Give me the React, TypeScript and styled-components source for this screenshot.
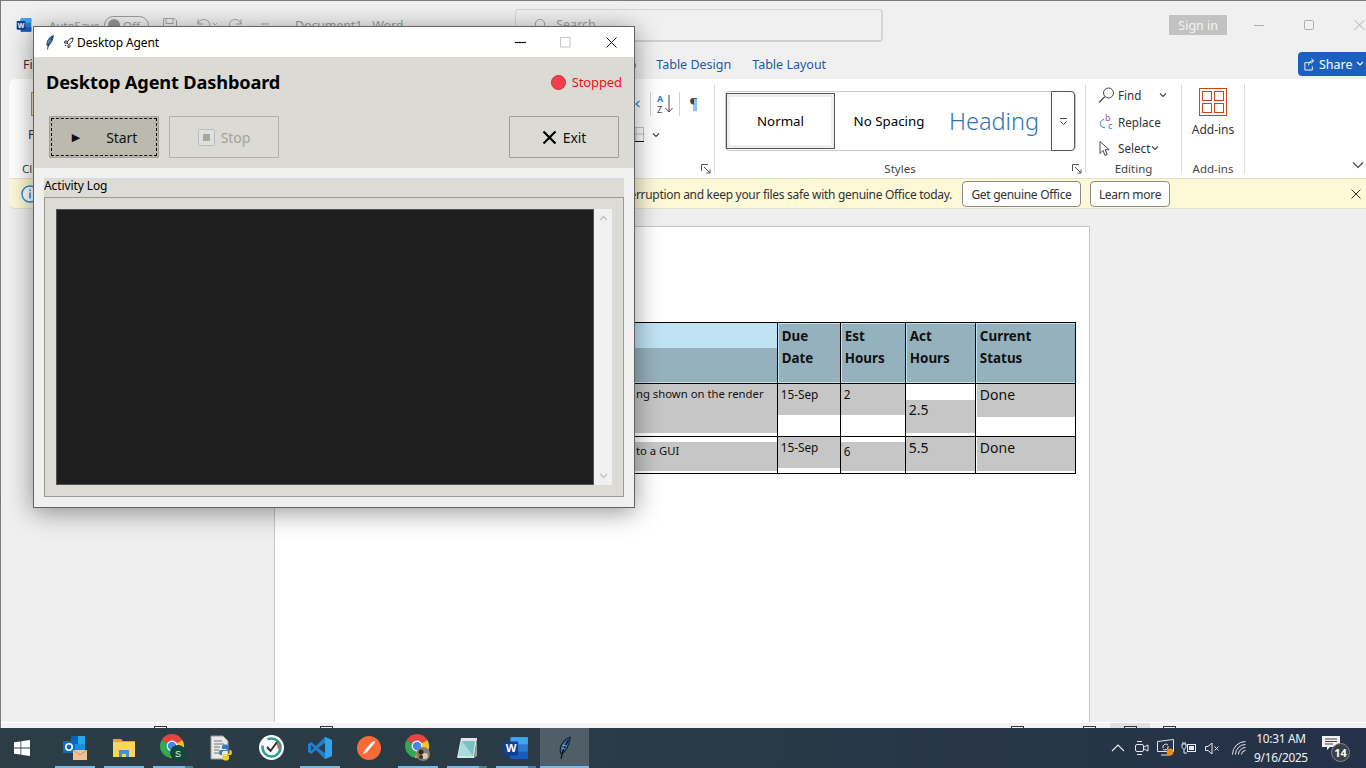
import React from "react";
import styled, { createGlobalStyle } from "styled-components";

const FONT = `"Noto Sans", "Open Sans", "Liberation Sans", sans-serif`;

const Global = createGlobalStyle`
  html, body { margin: 0; padding: 0; background: #f0f0f0; }
  * { box-sizing: border-box; }
  body { font-family: ${FONT}; }
`;

const Screen = styled.div`
  width: 1366px; height: 768px; position: relative; overflow: hidden;
  display: flex; flex-direction: column; font-family: ${FONT};
`;

/* ---------- Word window ---------- */
const WordWindow = styled.div`
  flex: 1; min-height: 0; display: flex; flex-direction: column;
  border-top: 1px solid #7a7a7a; border-left: 1px solid #7a7a7a; background: #f0f0f0;
`;
const WordTitle = styled.div`
  height: 48px; display: flex; align-items: center; padding-left: 15px; position: relative; color: #9a9a9a;
  font-size: 12.5px; flex: none;
`;
const AutoLabel = styled.span`margin-left: 17px; width: 55px; flex: none; font-size: 11.6px; white-space: nowrap; letter-spacing: -0.1px;`;
const DocName = styled.span`margin-left: 4px; white-space: nowrap; letter-spacing: -0.15px;`;
const AutoToggle = styled.div`
  width: 45px; height: 19px; border: 1px solid #9c9c9c; border-radius: 10px; flex: none;
  display: flex; align-items: center; padding-left: 3px; gap: 3px; font-size: 11.5px; color: #a0a0a0;
`;
const Knob = styled.span`width: 12px; height: 12px; border-radius: 50%; background: #9a9a9a;`;
const QuickIcons = styled.svg`margin-left: 12px; flex: none;`;
const SearchBox = styled.div`
  margin-left: 112px; width: 368px; height: 33px; background: #f0f0f0; border: 1px solid #d6d6d6;
  border-bottom: 2px solid #cfcfcf; border-right: 2px solid #d6d6d6; border-radius: 4px;
  display: flex; align-items: center; padding-left: 16px; gap: 10px; color: #a0a0a0; font-size: 12.5px;
`;
const SignIn = styled.div`
  margin-left: 286px; width: 58px; height: 20px; background: #c2c2c2; color: #f4f4f4; border-radius: 1px;
  font-size: 12.5px; display: flex; align-items: center; justify-content: center;
`;
const Caption = styled.div`
  margin-left: 27px; display: flex; align-items: center; gap: 40px;
`;
const TabRow = styled.div`
  height: 30px; display: flex; align-items: center; font-size: 12.5px; flex: none; position: relative; padding-left: 22px;
`;
const Tab = styled.span<{ $blue?: boolean; $ml?: number }>`
  color: ${p => (p.$blue ? "#1c58ad" : "#333")}; margin-left: ${p => p.$ml ?? 0}px; white-space: nowrap; padding-top: 1px;
`;
const ShareBtn = styled.div`
  margin-left: auto; width: 68px; height: 24px; background: #1b5fc1; color: #fff; border-radius: 4px 0 0 4px;
  display: flex; align-items: center; padding-left: 5px; gap: 3px; font-size: 12.5px;
`;
const Ribbon = styled.div`
  margin-left: 8px; height: 99px; flex: none; background: #fff; border-radius: 7px 0 0 0;
  display: flex; position: relative; color: #333;
`;
const RibbonGroup = styled.div<{ $w: number; $sep?: boolean }>`
  width: ${p => p.$w}px; flex-shrink: 0;
  position: relative; display: flex; flex-direction: column; margin: 5px 0;
  ${p => (p.$sep ? "border-right: 1px solid #dcdcdc;" : "")}
`;
const GroupBody = styled.div`flex: 1; min-height: 0; display: flex; position: relative;`;
const GroupLabel = styled.div<{ $left?: boolean; $pl?: number }>`
  height: 11px; font-size: 11.5px; line-height: 14px; color: #444; text-align: ${p => (p.$left ? "left" : "center")};
  padding-left: ${p => p.$pl ?? 0}px; white-space: nowrap; flex: none;
`;
const Launcher = styled.svg`position: absolute; right: 3px; bottom: -1px;`;
const ClipIcon = styled.div`
  margin: 8px 0 0 22px; width: 30px; height: 24px; border: 1px solid #d08a2a; background: #f6e7c9; flex: none;
`;
const ClipColumn = styled.div`display: flex; flex-direction: column; font-size: 12.5px; color: #333;`;
const ClipText = styled.div`margin: 10px 0 0 19px; line-height: 18px;`;
const ParaBody = styled.div`
  flex: 1; min-height: 0; display: flex; flex-direction: column; align-items: flex-end; padding: 7px 15px 0 0;
`;
const ParaRow = styled.div`display: flex; align-items: center; height: 25px;`;
const ParaRowTwo = styled.div`display: flex; align-items: center; height: 25px; margin: 6px 39px 0 0; gap: 8px;`;
const ParaSep = styled.div<{ $l: number; $r: number }>`width: 1px; height: 24px; background: #cfcfcf; margin: 0 ${p => p.$r}px 0 ${p => p.$l}px;`;
const Pilcrow = styled.span`font-size: 16px; color: #444; font-family: "Liberation Serif", serif; line-height: 1; width: 11px; text-align: center;`;
const OpenSvg = styled.svg`overflow: visible; flex: none;`;
const Gallery = styled.div`
  margin: 7px 0 0 10px; width: 351px; height: 60px; border: 1px solid #c9c9c9; border-radius: 4px;
  display: flex; align-items: stretch; color: #000;
`;
const StyleSelected = styled.div`
  width: 109px; margin: 1px 0 1px 0; border: 1px solid #555; outline: 3px solid #eee; outline-offset: -4px; background: #fff;
  display: flex; align-items: center; justify-content: center; font-size: 13.3px;
`;
const StyleItem = styled.div<{ $w: number; $heading?: boolean }>`
  width: ${p => p.$w}px; display: flex; align-items: center; justify-content: center; white-space: nowrap;
  font-size: ${p => (p.$heading ? 23.5 : 13.3)}px; color: ${p => (p.$heading ? "#2e74b5" : "#000")};
  font-weight: ${p => (p.$heading ? 300 : 400)};
`;
const GalleryMore = styled.div`
  margin-left: auto; width: 24px; margin-top: -1px; margin-bottom: -1px; border: 1px solid #555; border-radius: 0 4px 4px 0; background: #fff;
  display: flex; align-items: center; justify-content: center;
`;
const EditCol = styled.div`flex: 1; min-height: 0; display: flex; flex-direction: column; margin-top: -2px; padding: 0 0 0 12px; font-size: 11.7px; color: #333;`;
const EditRow = styled.div`height: 26.5px; flex: none; display: flex; align-items: center; white-space: nowrap;`;
const EditIcon = styled.span`width: 20px; display: inline-flex; flex: none;`;
const EditChevron = styled.svg<{ $ml: number }>`margin-left: ${p => p.$ml}px;`;
const AddinsCol = styled.div`flex: 1; min-height: 0; display: flex; flex-direction: column; align-items: center; font-size: 12px; color: #333; padding-top: 4px;`;
const AddinsText = styled.div`margin-top: 5px;`;
const Collapse = styled.svg`position: absolute; right: 2px; bottom: 9px;`;

const MessageBar = styled.div`
  margin-left: 8px; height: 31px; flex: none; background: #fdf8d6; border-top: 1px solid #e6e2c6; border-bottom: 1px solid #e6e2c6;
  display: flex; align-items: center; font-size: 12px; color: #333; position: relative; border-radius: 0 0 0 6px;
`;
const InfoBadge = styled.svg`margin-left: 12px; flex: none;`;
const MessageText = styled.div`flex: 1; text-align: right; white-space: nowrap; overflow: hidden; letter-spacing: -0.3px; padding-top: 1px;`;
const MsgButton = styled.button<{ $w: number; $ml: number }>`
  width: ${p => p.$w}px; margin-left: ${p => p.$ml}px; height: 26px; background: #fff; border: 1px solid #8a8a8a; border-radius: 4px;
  font: 12px ${FONT}; color: #333; padding: 1px 0 0; flex: none; letter-spacing: -0.3px;
`;
const MsgClose = styled.svg`margin: 0 5px 0 181px; flex: none;`;

const DocArea = styled.div`flex: 1; min-height: 0; padding: 17px 0 0 273px; background: #efefef;`;
const Page = styled.div`
  width: 816px; height: 100%; background: #fff; border: 1px solid #c6c6c6; border-bottom: none;
  padding: 95px 0 0 358px;
`;
const DocTable = styled.table`
  border-collapse: collapse; table-layout: fixed; width: 443px; font-family: ${FONT}; color: #111;
  th, td { border: 1px solid #000; padding: 0; vertical-align: top; overflow: hidden; }
  th:first-child, td:first-child { border-left: none; }
`;
const HeadCell = styled.th<{ $w: number }>`
  width: ${p => p.$w}px; height: 61px; background: #bfe3f3; font-weight: 700; font-size: 13.4px; text-align: left;
`;
const HeadFill = styled.div<{ $top?: number }>`
  background: #96b1be; margin: ${p => p.$top ?? 1}px 0 1px 1px; height: ${p => 58 - (p.$top ?? 1) + 1}px; padding: 1px 0 0 3px; line-height: 22px;
`;
const Shade = styled.div<{ $top?: number; $h: number; $size?: number; $pad?: number; $inset?: boolean }>`
  margin-top: ${p => p.$top ?? 0}px; height: ${p => p.$h}px; background: #c6c6c6;
  ${p => (p.$inset ? "margin-left: 1px;" : "")}
  font-size: ${p => p.$size ?? 11.8}px; padding: ${p => p.$pad ?? 2}px 0 0 3px; line-height: 16px; white-space: nowrap;
`;
const BodyRow = styled.tr<{ $h: number }>`height: ${p => p.$h}px;`;

const StatusBar = styled.div`
  height: 6px; flex: none; background: #f3f3f3; display: flex; overflow: hidden; position: relative; border-top: 1px solid #fff;
`;
const StatusGlyph = styled.div<{ $ml: number }>`
  margin: 3px 0 0 ${p => p.$ml}px; width: 13px; height: 10px; border: 1px solid #333; flex: none;
`;
const StatusActive = styled.div<{ $ml: number }>`
  margin-left: ${p => p.$ml}px; width: 40px; background: #e0e0e0; flex: none; padding: 3px 0 0 14px; position: relative;
`;
const StatusGlyphInner = styled.div`width: 13px; height: 10px; border: 1px solid #333;`;

/* ---------- Taskbar ---------- */
const Taskbar = styled.div`
  height: 40px; flex: none; display: flex; align-items: stretch;
  background: linear-gradient(90deg, #2c3d45 0%, #2a3a47 50%, #243149 100%); color: #fff; position: relative;
`;
const StartBtn = styled.div`width: 50px; display: flex; align-items: center; justify-content: center; padding-right: 6px; flex: none;`;
const TaskItem = styled.div<{ $open?: boolean; $multi?: boolean; $active?: boolean }>`
  width: 49px; flex: none; display: flex; align-items: center; justify-content: center; position: relative; padding: 0 0 1px 1px;
  ${p => (p.$active ? "background: #505f67;" : "")}
  ${p => p.$open ? `&::after { content: ""; position: absolute; left: ${p.$active ? 0 : 5}px; right: ${p.$active ? 0 : p.$multi ? 12 : 4}px; bottom: 0; height: 2px; background: #76b9ed; }` : ""}
  ${p => p.$multi ? `&::before { content: ""; position: absolute; left: 37px; right: 4px; bottom: 0; height: 2px; background: #4f7f9f; }` : ""}
`;
const Tray = styled.div`margin-left: auto; display: flex; align-items: center; padding-right: 14px;`;
const TrayIcon = styled.span<{ $w: number }>`width: ${p => p.$w}px; display: flex; justify-content: center; align-items: center; flex: none;`;
const Clock = styled.div`
  width: 54px; margin: 0 14px 0 0; text-align: center; font-size: 11.8px; line-height: 19px; color: #f2f2f2; white-space: nowrap;
  display: flex; flex-direction: column; align-items: center; letter-spacing: -0.25px;
`;
const Notif = styled.div`width: 30px; height: 30px; position: relative; flex: none; margin-top: 2px;`;
const NotifBadge = styled.div`
  position: absolute; left: 9px; top: 9px; width: 19px; height: 19px; border-radius: 50%; background: #3a4048; border: 1px solid #888;
  font-size: 11px; font-weight: 700; display: flex; align-items: center; justify-content: center; color: #fff;
`;

/* ---------- Agent window ---------- */
const AgentWindow = styled.div`
  position: absolute; left: 33px; top: 26px; width: 602px; height: 482px; background: #f0f0f0; border: 1px solid #646464;
  box-shadow: 0 4px 24px rgba(0,0,0,.42); display: flex; flex-direction: column; color: #000;
`;
const AgentTitle = styled.div`
  height: 30px; flex: none; background: #fff; display: flex; align-items: center; padding-left: 11px; font-size: 12px;
`;
const TitleText = styled.span`margin-left: 3px; white-space: nowrap; letter-spacing: -0.1px;`;
const TitleEmoji = styled.svg`margin-left: 9px;`;
const AgentCaption = styled.div`margin-left: auto; display: flex; align-items: center;`;
const CapBtn = styled.span<{ $w: number }>`width: ${p => p.$w}px; display: flex; justify-content: center;`;
const AgentHeader = styled.div`background: #dbdad5; flex: none; height: 111px; display: flex; flex-direction: column;`;
const HeaderTop = styled.div`height: 50px; flex: none; display: flex; align-items: center; padding: 0 12px 0 12px;`;
const Heading = styled.h1`margin: 0; font-size: 18.2px; font-weight: 700; white-space: nowrap; letter-spacing: -0.15px;`;
const StatusWrap = styled.div`margin-left: auto; display: flex; align-items: center; gap: 6px; color: #fa0a14; font-size: 13px; letter-spacing: -0.1px;`;
const StatusDot = styled.span`
  width: 15px; height: 15px; border-radius: 50%; background: #f2404a; border: 1px solid #c9313a;
  background-image: radial-gradient(#d8303a 30%, transparent 32%); background-size: 2px 2px;
`;
const Toolbar = styled.div`margin-top: 9px; padding: 0 15px; display: flex; gap: 10px;`;
const ActionBtn = styled.button<{ $variant?: "pressed" | "disabled" }>`
  width: 110px; height: 42px; border: 1px solid ${p => (p.$variant === "disabled" ? "#b1afa7" : "#a09e95")}; border-radius: 1px; padding: 0;
  background: ${p => (p.$variant === "pressed" ? "#bcb9ae" : "#dbdad5")};
  color: ${p => (p.$variant === "disabled" ? "#a3a29d" : "#111")};
  font: 14px ${FONT}; display: flex; align-items: center; justify-content: center; letter-spacing: -0.1px;
  ${p => (p.$variant === "pressed" ? "outline: 1px dashed #000; outline-offset: -3px; gap: 26px; padding-left: 1px;" : "gap: 6px;")}
`;
const PushRight = styled.div`margin-left: auto;`;
const PlayGlyph = styled.span`font: 11px "DejaVu Sans", sans-serif;`;
const LogSection = styled.section`flex: 1; padding: 10px; display: flex; flex-direction: column; min-height: 0;`;
const LogLabel = styled.div`height: 19px; background: #dcdbd6; font-size: 12px; line-height: 16px; letter-spacing: -0.1px; flex: none;`;
const LogFrame = styled.div`
  flex: 1; background: #dcdbd6; border: 1px solid #9c998f; padding: 11px; display: flex; min-height: 0;
`;
const LogText = styled.div`flex: 1; background: #1e1e1e; border: 1px solid #55544f;`;
const Scroll = styled.div`
  width: 18px; background: #f0f0f0; display: flex; flex-direction: column; justify-content: space-between; align-items: center; padding: 6px 0;
`;

/* ---------- Icons ---------- */
const WordLogo = ({ s = 16 }: { s?: number }) => (
  <svg width={s} height={s} viewBox="0 0 24 24">
    <rect x="7" y="2" width="16" height="20" rx="1.5" fill="#2b7cd3" />
    <rect x="7" y="2" width="16" height="6.6" fill="#41a5ee" />
    <rect x="7" y="15.3" width="16" height="6.7" fill="#185abd" />
    <rect x="1" y="6" width="13" height="13" rx="1.2" fill="#103f91" />
    <text x="7.5" y="16" fontSize="10.5" fontWeight="700" fill="#fff" textAnchor="middle" fontFamily="Liberation Sans">W</text>
  </svg>
);
const Feather = ({ w = 12, h = 18, dark = false }: { w?: number; h?: number; dark?: boolean }) => (
  <svg width={w} height={h} viewBox="0 0 12 20">
    <path d="M10.6 .8C6 2 2.2 6.4 1.8 12c-.1 1.6.4 2.6 1.2 3 3.6-1.8 6.4-7 7.6-14.2z" fill={dark ? "#2f6aa0" : "#3d86c6"} stroke="#0d1a2a" strokeWidth=".9" />
    <path d="M9 3 4.2 12.6 2.6 19.4" fill="none" stroke="#05090f" strokeWidth="1" />
    <path d="M3 10l3 1M4 7.5l3.5 .8" stroke="#bcd8ef" strokeWidth=".6" />
  </svg>
);
const Chrome = ({ extra }: { extra?: React.ReactNode }) => (
  <svg width="28" height="28" viewBox="0 0 28 28" style={{ overflow: "visible" }}>
    <g transform="translate(1 0)">
      <path d="M12 12 1.6 6A12 12 0 0 1 22.4 6z" fill="#e8453c" />
      <path d="M12 12 1.6 6A12 12 0 0 0 10 23.8z" fill="#34a853" />
      <path d="M12 12 22.4 6A12 12 0 0 1 10 23.8z" fill="#fbc02d" />
      <circle cx="12" cy="12" r="5.4" fill="#fff" />
      <circle cx="12" cy="12" r="4.2" fill="#4285f4" />
    </g>
    {extra}
  </svg>
);
const LauncherSvg = () => (
  <Launcher width="10" height="10" viewBox="0 0 10 10"><path d="M.5 7V.5H7M3 3l6 6M9 5.5V9H5.5" fill="none" stroke="#555" strokeWidth="1" /></Launcher>
);
const Chevron = ({ ml = 0 }: { ml?: number }) => (
  <EditChevron $ml={ml} width="8" height="6" viewBox="0 0 8 6"><path d="M1 1.5l3 3 3-3" fill="none" stroke="#444" strokeWidth="1.1" /></EditChevron>
);

export default function App() {
  return (
    <Screen>
      <Global />
      <WordWindow>
        <WordTitle>
          <WordLogo />
          <AutoLabel>AutoSave</AutoLabel>
          <AutoToggle><Knob />Off</AutoToggle>
          <QuickIcons width="130" height="18" viewBox="0 0 130 18" fill="none" stroke="#a4a4a4" strokeWidth="1">
            <path d="M2.5 2.5h11l2 2v11h-13zM5 2.5v5h7v-5M5 15.5v-5h7v5" />
            <path d="M37 8a6 6 0 1 1 2 6M37 3v5h5" />
            <path d="M52 7l2 2 2-2" strokeWidth=".8" />
            <path d="M80 8a6 6 0 1 0-2 6M80 3v5h-5" />
            <path d="M100 8h8M101 12l3 3 3-3" />
          </QuickIcons>
          <DocName>Document1 - Word</DocName>
          <SearchBox>
            <svg width="14" height="14" viewBox="0 0 14 14" fill="none" stroke="#a0a0a0"><circle cx="8" cy="6" r="4.6" /><path d="M4.6 9.4.8 13.2" /></svg>
            Search
          </SearchBox>
          <SignIn>Sign in</SignIn>
          <Caption>
            <svg width="10" height="10" viewBox="0 0 10 10"><path d="M0 5.5h10" stroke="#b0b0b0" /></svg>
            <svg width="10" height="10" viewBox="0 0 10 10"><rect x=".5" y=".5" width="9" height="9" rx="1" fill="none" stroke="#b0b0b0" /></svg>
            <svg width="11" height="10" viewBox="0 0 10 10"><path d="M0 0l10 10M10 0 0 10" stroke="#b0b0b0" /></svg>
          </Caption>
        </WordTitle>
        <TabRow>
          <Tab>File</Tab>
          <Tab $ml={566}>Help</Tab>
          <Tab $blue $ml={20}>Table Design</Tab>
          <Tab $blue $ml={21}>Table Layout</Tab>
          <ShareBtn>
            <svg width="13" height="13" viewBox="0 0 14 14" fill="none" stroke="#fff" strokeWidth="1"><path d="M9 5H2v8h8V9M6 8c0-3 2-5 5-5M9 .8 11.6 3 9 5.6" /></svg>
            Share
            <svg width="8" height="6" viewBox="0 0 8 6"><path d="M1 1l3 3 3-3" fill="none" stroke="#fff" strokeWidth="1.2" /></svg>
          </ShareBtn>
        </TabRow>
        <Ribbon>
          <RibbonGroup $w={200}>
            <GroupBody>
              <ClipColumn>
                <ClipIcon />
                <ClipText>Paste</ClipText>
              </ClipColumn>
            </GroupBody>
            <GroupLabel $left $pl={13}>Clipboard</GroupLabel>
          </RibbonGroup>
          <RibbonGroup $w={506} $sep>
            <ParaBody>
              <ParaRow>
                <svg width="9" height="14" viewBox="0 0 9 14" fill="none" stroke="#2e86c8" strokeWidth="1.2"><path d="M0 3.5h2M0 6.5h2" stroke="#777" /><path d="M7.5 4 4 7l3.500 3" /></svg>
                <ParaSep $l={9} $r={5} />
                <OpenSvg width="18" height="22" viewBox="0 0 18 22">
                  <text x="1" y="9" fontSize="9" fill="#2e86c8" fontWeight="700" fontFamily="Noto Sans">A</text>
                  <text x="1" y="20" fontSize="9" fill="#444" fontFamily="Noto Sans">Z</text>
                  <path d="M13 2v17M9.500 15l3.500 4 3.500-4" fill="none" stroke="#444" strokeWidth="1" />
                </OpenSvg>
                <ParaSep $l={5} $r={8} />
                <Pilcrow>¶</Pilcrow>
              </ParaRow>
              <ParaRowTwo>
                <svg width="16" height="15" viewBox="0 0 16 15"><path d="M.5 .5h15v13.500M8 .5v14M.5 7h15" stroke="#888" strokeDasharray="1 1" fill="none" /><path d="M0 14.500h16" stroke="#111" /></svg>
                <Chevron />
              </ParaRowTwo>
            </ParaBody>
            <GroupLabel>Paragraph</GroupLabel>
            <LauncherSvg />
          </RibbonGroup>
          <RibbonGroup $w={371} $sep>
            <GroupBody>
              <Gallery>
                <StyleSelected>Normal</StyleSelected>
                <StyleItem $w={108}>No Spacing</StyleItem>
                <StyleItem $w={102} $heading>Heading</StyleItem>
                <GalleryMore>
                  <svg width="9" height="9" viewBox="0 0 9 9" fill="none" stroke="#444"><path d="M1 1.5h7M1.5 4.5l3 3 3-3" /></svg>
                </GalleryMore>
              </Gallery>
            </GroupBody>
            <GroupLabel>Styles</GroupLabel>
            <LauncherSvg />
          </RibbonGroup>
          <RibbonGroup $w={96} $sep>
            <EditCol>
              <EditRow>
                <EditIcon><svg width="17" height="17" viewBox="0 0 17 17" fill="none" stroke="#444"><circle cx="10.5" cy="6" r="5" /><path d="M6.8 9.6 1 15.5" strokeWidth="1.3" /></svg></EditIcon>
                Find<Chevron ml={17} />
              </EditRow>
              <EditRow>
                <EditIcon>
                  <OpenSvg width="17" height="17" viewBox="0 0 17 17"><text x="7" y="8" fontSize="9" fill="#a54fc0" fontFamily="Noto Sans">b</text><text x="10" y="16" fontSize="9" fill="#2d7fc1" fontFamily="Noto Sans">c</text><path d="M6 6.5C2.5 7 1 11 4 14l3 .8" fill="none" stroke="#2d7fc1" /></OpenSvg>
                </EditIcon>
                Replace
              </EditRow>
              <EditRow>
                <EditIcon><svg width="14" height="17" viewBox="0 0 14 17" fill="none" stroke="#444"><path d="M2 1.5v12l3-3 2 5 2.2-1-2-4.8h4z" /></svg></EditIcon>
                Select<Chevron ml={1} />
              </EditRow>
            </EditCol>
            <GroupLabel>Editing</GroupLabel>
          </RibbonGroup>
          <RibbonGroup $w={63} $sep>
            <AddinsCol>
              <svg width="28" height="28" viewBox="0 0 28 28" fill="none" stroke="#c8441a" strokeWidth="1"><rect x=".5" y=".5" width="27" height="27" /><rect x="3.5" y="3.5" width="9" height="9" /><rect x="15.5" y="3.5" width="9" height="9" /><rect x="3.5" y="15.5" width="9" height="9" /><rect x="15.5" y="15.5" width="9" height="9" /></svg>
              <AddinsText>Add-ins</AddinsText>
            </AddinsCol>
            <GroupLabel>Add-ins</GroupLabel>
          </RibbonGroup>
          <Collapse width="12" height="8" viewBox="0 0 12 8"><path d="M1 1.5l5 5 5-5" fill="none" stroke="#444" strokeWidth="1.1" /></Collapse>
        </Ribbon>
        <MessageBar>
          <InfoBadge width="18" height="18" viewBox="0 0 18 18"><circle cx="9" cy="9" r="8" fill="#fff" stroke="#2a8ad4" strokeWidth="1.4" /><path d="M9 7.5v6M9 4.5v1.6" stroke="#2a8ad4" strokeWidth="1.5" /></InfoBadge>
          <MessageText>Avoid interruption and keep your files safe with genuine Office today.</MessageText>
          <MsgButton $w={119} $ml={10}>Get genuine Office</MsgButton>
          <MsgButton $w={80} $ml={9}>Learn more</MsgButton>
          <MsgClose width="10" height="10" viewBox="0 0 10 10"><path d="M.5 .5l9 9M9.5 .5l-9 9" stroke="#333" /></MsgClose>
        </MessageBar>
        <DocArea>
          <Page>
            <DocTable>
              <thead>
                <tr>
                  <HeadCell $w={144}><HeadFill $top={25} /></HeadCell>
                  <HeadCell $w={63}><HeadFill>Due<br />Date</HeadFill></HeadCell>
                  <HeadCell $w={65}><HeadFill>Est<br />Hours</HeadFill></HeadCell>
                  <HeadCell $w={70}><HeadFill>Act<br />Hours</HeadFill></HeadCell>
                  <HeadCell $w={100}><HeadFill>Current<br />Status</HeadFill></HeadCell>
                </tr>
              </thead>
              <tbody>
                <BodyRow $h={53}>
                  <td><Shade $h={49} $size={11.3}>ng shown on the render</Shade></td>
                  <td><Shade $h={31}>15-Sep</Shade></td>
                  <td><Shade $h={31}>2</Shade></td>
                  <td><Shade $top={16} $h={33} $size={14} $pad={2}>2.5</Shade></td>
                  <td><Shade $h={33} $size={14} $pad={3} $inset>Done</Shade></td>
                </BodyRow>
                <BodyRow $h={37}>
                  <td><Shade $top={5} $h={29} $pad={1} $size={11.3}>to a GUI</Shade></td>
                  <td><Shade $h={31}>15-Sep</Shade></td>
                  <td><Shade $top={5} $h={29} $pad={1}>6</Shade></td>
                  <td><Shade $h={34} $size={14} $pad={3}>5.5</Shade></td>
                  <td><Shade $h={34} $size={14} $pad={3} $inset>Done</Shade></td>
                </BodyRow>
              </tbody>
            </DocTable>
          </Page>
        </DocArea>
        <StatusBar>
          <StatusGlyph $ml={153} />
          <StatusGlyph $ml={153} />
          <StatusGlyph $ml={678} />
          <StatusGlyph $ml={59} />
          <StatusActive $ml={14}><StatusGlyphInner /></StatusActive>
          <StatusGlyph $ml={13} />
        </StatusBar>
      </WordWindow>

      <Taskbar>
        <StartBtn>
          <svg width="16" height="16" viewBox="0 0 16 16" fill="#fff"><path d="M0 2.3 6.5 1.4v6.2H0zM7.3 1.3 16 0v7.6H7.3zM0 8.4h6.5v6.2L0 13.7zM7.3 8.4H16V16l-8.7-1.3z" /></svg>
        </StartBtn>
        <TaskItem $open>
          <svg width="26" height="26" viewBox="0 0 26 26">
            <rect x="9" y="1" width="14" height="17" fill="#1490df" /><rect x="9" y="1" width="7" height="8" fill="#0364b8" /><rect x="16" y="1" width="7" height="8" fill="#28a8ea" />
            <rect x="1" y="6" width="12" height="12" fill="#0f6cbd" /><circle cx="7" cy="12" r="3.2" fill="none" stroke="#fff" strokeWidth="1.6" />
            <rect x="11" y="15" width="14" height="10" fill="#eec291" /><path d="M11 15l7 5 7-5" fill="none" stroke="#c9965e" />
          </svg>
        </TaskItem>
        <TaskItem $open>
          <svg width="22" height="20" viewBox="0 0 22 20"><path d="M0 1h8l2 2h12v15H0z" fill="#e0a82a" /><rect y="4" width="22" height="15" fill="#fcd462" /><path d="M6 19v-7h10v7h-3v-3H9v3z" fill="#3a94d8" /></svg>
        </TaskItem>
        <TaskItem $open $multi>
          <Chrome extra={<g><circle cx="19" cy="19" r="8" fill="#0d4a3a" /><text x="19" y="22.5" fontSize="9" fill="#dff" textAnchor="middle" fontFamily="Liberation Sans">S</text></g>} />
        </TaskItem>
        <TaskItem>
          <svg width="24" height="26" viewBox="0 0 24 26">
            <path d="M1 1h12l5 5v18H1z" fill="#e8e8e8" stroke="#9a9a9a" /><path d="M4 6h8M4 9h10M4 12h6M4 15h5M4 18h5" stroke="#777" />
            <path d="M15 9.500c-3 0-3 1.600-3 3v1.500h4.500v1h-6c-1.800 0-1.800 5 0 5H12v-2c0-1.500 1-2 2-2h3c1.500 0 2-1 2-2v-2.500c0-1.500-2-2-4-2z" fill="#3d7cb0" />
            <path d="M16 25.500c3 0 3-1.600 3-3V21h-4.500v-1h6c1.800 0 1.800-5 0-5H19.500v2c0 1.500-1 2-2 2h-3c-1.500 0-2 1-2 2v2.500c0 1.500 1.500 2 3.500 2z" fill="#f5c93e" />
          </svg>
        </TaskItem>
        <TaskItem>
          <svg width="25" height="25" viewBox="0 0 25 25">
            <circle cx="12.5" cy="12.5" r="12.500" fill="#fff" /><circle cx="12.5" cy="12.5" r="9" fill="none" stroke="#2e9e8f" strokeWidth="2.6" strokeDasharray="30 8" />
            <path d="M18 8a8 8 0 0 1 2 6" stroke="#c96b5e" strokeWidth="2.600" fill="none" />
            <path d="M8 12l3.500 4L18 7" fill="none" stroke="#333" strokeWidth="2" />
          </svg>
        </TaskItem>
        <TaskItem $open>
          <svg width="24" height="24" viewBox="0 0 24 24">
            <path d="M17 1 8 10 3 6 0 8v8l3 2 5-4 9 9 7-3V4z" fill="#1f7fd0" />
            <path d="M17 1v22l7-3V4z" fill="#2da4ee" /><path d="M17 7 10 12l7 5zM3 9v6l3-3z" fill="#2c3d45" />
          </svg>
        </TaskItem>
        <TaskItem>
          <svg width="24" height="24" viewBox="0 0 24 24">
            <circle cx="12" cy="12" r="12" fill="#f76b36" />
            <path d="M18 5c-2 0-3 1-4 2l-6 7-2 4 4-2 6-7c1-1 2-2 2-4z" fill="#fff" /><path d="M7 18l1.500-4 2 2z" fill="#ffd9c8" />
          </svg>
        </TaskItem>
        <TaskItem $open>
          <Chrome extra={<g><circle cx="19" cy="20" r="7" fill="#8d7a6e" /><circle cx="17" cy="18" r="2.500" fill="#2e2622" /><circle cx="21" cy="22" r="3" fill="#d8c8bb" /><circle cx="17" cy="23" r="2" fill="#3a302a" /></g>} />
        </TaskItem>
        <TaskItem $open $multi>
          <svg width="24" height="24" viewBox="0 0 24 24">
            <path d="M6 2h16l-3 20H2z" fill="#cfe8e6" /><path d="M7 5h13l-2 15H4z" fill="#7cc0c2" /><path d="M7 5 4 20h14z" fill="#a6dcdc" /><path d="M6 2h16v3H6z" fill="#e4e4e4" /><path d="M19 22l3-20v18z" fill="#999" />
          </svg>
        </TaskItem>
        <TaskItem $open $multi>
          <WordLogo s={26} />
        </TaskItem>
        <TaskItem $open $active>
          <Feather w={14} h={26} dark />
        </TaskItem>
        <Tray>
          <TrayIcon $w={24}><svg width="14" height="8" viewBox="0 0 14 8"><path d="M1 7l6-6 6 6" fill="none" stroke="#eee" strokeWidth="1.100" /></svg></TrayIcon>
          <TrayIcon $w={24}>
            <svg width="14" height="16" viewBox="0 0 14 16" fill="none" stroke="#e8e8e8"><rect x=".5" y="4.500" width="8" height="7" rx="1.500" /><path d="M9 7l4-2v6l-4-2M2 1.500h5M2 14.500h5" /></svg>
          </TrayIcon>
          <TrayIcon $w={23}>
            <svg width="18" height="18" viewBox="0 0 18 18" style={{ overflow: "visible" }} fill="none" stroke="#e8e8e8"><path d="M.5 2.500 16.500.5v12H.5zM4 16h9" /><path d="M6 9a3 3 0 0 1 5-3M11 7a3 3 0 0 1-5 3" /><circle cx="13" cy="13" r="3.400" fill="#f28c13" stroke="none" /></svg>
          </TrayIcon>
          <TrayIcon $w={23}>
            <svg width="16" height="12" viewBox="0 0 16 12" fill="none" stroke="#e8e8e8"><path d="M1 2v3c0 1 1 2 2 2s2-1 2-2V2H1zM2 0v2M4 0v2M3 7v4h3" /><rect x="6.500" y="2.500" width="8" height="7" /><rect x="8" y="4" width="5" height="4" fill="#e8e8e8" stroke="none" /></svg>
          </TrayIcon>
          <TrayIcon $w={24}>
            <svg width="15" height="13" viewBox="0 0 15 13" fill="none" stroke="#e8e8e8"><path d="M.5 4.500H3L7 1v11L3 8.500H.500zM9.500 4.500l4 4M13.500 4.500l-4 4" /></svg>
          </TrayIcon>
          <TrayIcon $w={30}>
            <svg width="14" height="14" viewBox="0 0 14 14" fill="none" stroke="#e8e8e8"><path d="M.5 13.500a13 13 0 0 1 13-13M3.500 13.500a10 10 0 0 1 10-10M6.500 13.500a7 7 0 0 1 7-7M9.500 13.500a4 4 0 0 1 4-4" /></svg>
          </TrayIcon>
          <Clock><span>10:31 AM</span><span>9/16/2025</span></Clock>
          <Notif>
            <svg width="18" height="15" viewBox="0 0 18 15"><path d="M0 0h18v11H8l-3 3v-3H0z" fill="#f2f2f2" /><path d="M3 3h12M3 5.500h12M3 8h8" stroke="#444" /></svg>
            <NotifBadge>14</NotifBadge>
          </Notif>
        </Tray>
      </Taskbar>

      <AgentWindow>
        <AgentTitle>
          <Feather w={10} h={15} />
          <TitleEmoji width="10" height="11" viewBox="0 0 10 11" fill="none" stroke="#222">
            <path d="M9 1C6 1 4 3 3 6l1.500 1.500C7 6.500 9 4.500 9 1zM3 4H1L.500 6H3M6 8v2l-2 .500V8" />
            <path d="M1 9l1-1" />
          </TitleEmoji>
          <TitleText>Desktop Agent</TitleText>
          <AgentCaption>
            <CapBtn $w={46}><svg width="11" height="11" viewBox="0 0 11 11"><path d="M0 5.500h11" stroke="#111" strokeWidth="1.200" /></svg></CapBtn>
            <CapBtn $w={45}><svg width="11" height="11" viewBox="0 0 11 11"><rect x=".5" y=".5" width="9.500" height="9.500" fill="none" stroke="#c8c8c8" /></svg></CapBtn>
            <CapBtn $w={46}><svg width="11" height="11" viewBox="0 0 11 11"><path d="M.5 .5l10 10M10.500 .5l-10 10" stroke="#111" /></svg></CapBtn>
          </AgentCaption>
        </AgentTitle>
        <AgentHeader>
          <HeaderTop>
            <Heading>Desktop Agent Dashboard</Heading>
            <StatusWrap><StatusDot />Stopped</StatusWrap>
          </HeaderTop>
          <Toolbar>
            <ActionBtn $variant="pressed"><PlayGlyph>▶</PlayGlyph>Start</ActionBtn>
            <ActionBtn $variant="disabled">
              <svg width="17" height="17" viewBox="0 0 17 17"><rect x=".5" y=".5" width="16" height="16" rx="1" fill="#dfdfdc" stroke="#b4bcc4" /><rect x="5" y="5" width="7" height="7" fill="#a6a6a4" /></svg>
              Stop
            </ActionBtn>
            <PushRight>
              <ActionBtn>
                <svg width="15" height="15" viewBox="0 0 15 15"><path d="M1.500 1.500l12 12M13.500 1.500l-12 12" stroke="#000" strokeWidth="2.200" /></svg>
                Exit
              </ActionBtn>
            </PushRight>
          </Toolbar>
        </AgentHeader>
        <LogSection>
          <LogLabel>Activity Log</LogLabel>
          <LogFrame>
            <LogText />
            <Scroll>
              <svg width="9" height="6" viewBox="0 0 9 6"><path d="M1 5l3.500-3.500L8 5" fill="none" stroke="#c4c4c4" strokeWidth="1.500" /></svg>
              <svg width="9" height="6" viewBox="0 0 9 6"><path d="M1 1l3.500 3.500L8 1" fill="none" stroke="#c4c4c4" strokeWidth="1.500" /></svg>
            </Scroll>
          </LogFrame>
        </LogSection>
      </AgentWindow>
    </Screen>
  );
}
